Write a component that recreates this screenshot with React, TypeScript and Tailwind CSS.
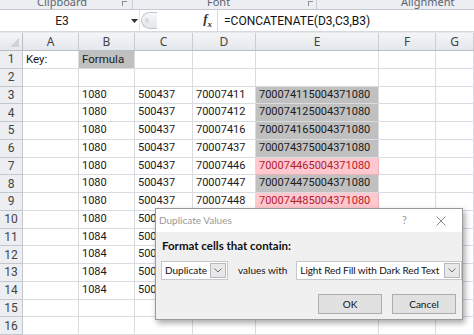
import React from "react";

const cols = [
  { id: "A", w: "w-[56px]" },
  { id: "B", w: "w-[56px]" },
  { id: "C", w: "w-[58px]" },
  { id: "D", w: "w-[63px]" },
  { id: "E", w: "w-[123px]" },
  { id: "F", w: "w-[57px]" },
  { id: "G", w: "flex-1" },
];

type Row = { a?: string; b?: string; c?: string; d?: string; e?: string; dup?: boolean };

const rows: Row[] = [
  { a: "Key:", b: "Formula" },
  {},
  { b: "1080", c: "500437", d: "70007411", e: "700074115004371080" },
  { b: "1080", c: "500437", d: "70007412", e: "700074125004371080" },
  { b: "1080", c: "500437", d: "70007416", e: "700074165004371080" },
  { b: "1080", c: "500437", d: "70007437", e: "700074375004371080" },
  { b: "1080", c: "500437", d: "70007446", e: "700074465004371080", dup: true },
  { b: "1080", c: "500437", d: "70007447", e: "700074475004371080" },
  { b: "1080", c: "500437", d: "70007448", e: "700074485004371080", dup: true },
  { b: "1080", c: "500437" },
  { b: "1084", c: "500437" },
  { b: "1084", c: "500437" },
  { b: "1084", c: "500437" },
  { b: "1084", c: "500437" },
  {},
  {},
];

const Ribbon = () => (
  <div className="h-[10px] overflow-hidden bg-[#eceef1] border-b border-[#c6cad0] flex text-[11px] text-[#5d6470] leading-[13px]">
    <div className="w-[133px] flex border-r border-[#c9cdd3]">
      <span className="-mt-[5px] ml-[37px]">Clipboard</span>
      <span className="ml-auto mr-[5px] w-[5px] h-[5px] border-l border-t border-[#8a8f96] mt-[1px]" />
    </div>
    <div className="w-[184px] flex border-r border-[#c9cdd3]">
      <span className="-mt-[5px] ml-[74px]">Font</span>
      <span className="ml-auto mr-[3px] w-[5px] h-[5px] border-l border-t border-[#8a8f96] mt-[1px]" />
    </div>
    <div className="flex-1 flex">
      <span className="-mt-[5px] ml-[84px]">Alignment</span>
    </div>
  </div>
);

const FormulaBar = () => (
  <div className="h-[22px] bg-white border-b border-[#d5d8dc] flex items-center font-['Roboto',sans-serif]">
    <div className="w-[140px] h-full flex items-center border-r border-[#e2e4e7]">
      <span className="w-[124px] text-center text-[12px] text-[#222]">E3</span>
      <svg width="7" height="4" viewBox="0 0 7 4" className="ml-[7px]">
        <path d="M0 0h7L3.5 4z" fill="#333" />
      </svg>
    </div>
    <div className="w-[16px] h-[17px] ml-[1px] rounded-l-full border border-r-0 border-[#c3c7cc] bg-gradient-to-b from-[#f7f8f9] to-[#e3e6ea] flex items-center pl-[3px]">
      <span className="w-[4px] h-[5px] rounded-full bg-[#d6d9dd]" />
    </div>
    <div className="w-[60px] flex justify-end pr-[5px]">
      <span className="font-['Liberation_Serif',serif] italic text-[13px] text-[#333] font-bold">
        f<span className="text-[9px] align-sub">x</span>
      </span>
    </div>
    <div className="flex-1 h-full border-l border-[#d5d8dc] flex items-center pl-[6px] text-[12px] text-[#111]">
      =CONCATENATE(D3,C3,B3)
    </div>
  </div>
);

const HeaderRow = () => (
  <div className="flex h-[18px] bg-gradient-to-b from-[#f3f4f6] to-[#e5e8ec] border-b border-[#b9bec5] text-[12px] text-[#444]">
    <div className="w-[23px] border-r border-[#b9bec5] flex items-end justify-end p-[3px]">
      <svg width="9" height="9" viewBox="0 0 9 9">
        <path d="M9 0V9H0z" fill="#cfd3d8" />
      </svg>
    </div>
    {cols.map((c) => (
      <div key={c.id} className={`${c.w} border-r border-[#c9cdd3] flex items-center justify-center`}>
        {c.id}
      </div>
    ))}
  </div>
);

const Cell = ({ w, children, cls = "" }: { w: string; children?: React.ReactNode; cls?: string }) => (
  <div className={`${w} border-r border-b border-[#dadcdf] flex items-center pl-[3px] whitespace-nowrap overflow-hidden ${cls}`}>
    {children}
  </div>
);

const Grid = () => (
  <div className="font-['Roboto',sans-serif] text-[11px] text-[#1a1a1a]">
    {rows.map((r, i) => {
      const n = i + 1;
      const eFill = n >= 3 && n <= 9;
      return (
        <div key={n} className="flex h-[17.75px]">
          <div className="w-[23px] bg-[#eceef1] border-r border-b border-[#c3c8ce] flex items-center justify-center text-[12px] text-[#444]">
            {n}
          </div>
          <Cell w="w-[56px]" cls="text-[11.5px]">{r.a}</Cell>
          <Cell w="w-[56px]" cls={n === 1 ? "bg-[#c0c0c0] border-[#b8b8b8] text-[11.5px]" : ""}>
            {r.b}
          </Cell>
          <Cell w="w-[58px]">{r.c}</Cell>
          <Cell w="w-[63px]">{r.d}</Cell>
          <Cell
            w="w-[123px]"
            cls={
              r.dup
                ? "bg-[#ffc7ce] text-[#b3222e] border-[#e8b4ba]"
                : eFill
                ? "bg-[#c0c0c0] border-[#adadad]"
                : ""
            }
          >
            {r.e}
          </Cell>
          <Cell w="w-[57px]" />
          <Cell w="flex-1" />
        </div>
      );
    })}
  </div>
);

const Chevron = () => (
  <div className="w-[16px] h-[15px] shrink-0 border border-[#b5b8bd] bg-[#e8e8e8] flex items-center justify-center">
    <svg width="8" height="5" viewBox="0 0 8 5">
      <path d="M0.5 0.5L4 4L7.5 0.5" fill="none" stroke="#6d6d6d" strokeWidth="1" />
    </svg>
  </div>
);

const Dialog = () => (
  <div className="absolute left-[155px] top-[208px] w-[308px] h-[112px] bg-[#f0f0f0] border border-[#9a9a9a] shadow-[2px_3px_6px_rgba(0,0,0,0.35)] font-['Lato',sans-serif] text-[10px] text-[#111] flex flex-col whitespace-nowrap">
    <div className="h-[23px] bg-white flex items-center pl-[3px]">
      <span className="text-[#9a9a9a] text-[10px]">Duplicate Values</span>
      <span className="ml-auto text-[#999] text-[11px] mr-[29px]">?</span>
      <svg width="10" height="10" viewBox="0 0 10 10" className="mr-[16px]">
        <path d="M0.5 0.5L9.5 9.5M9.5 0.5L0.5 9.5" stroke="#8a8a8a" strokeWidth="1" />
      </svg>
    </div>
    <div className="pl-[6px] pt-[5px] font-bold text-[11.5px]">Format cells that contain:</div>
    <div className="flex items-center mt-[7px] pl-[5px]">
      <div className="w-[67px] h-[19px] shrink-0 bg-white border border-[#c4c7cc] flex items-center justify-between pl-[3px] pr-[1px]">
        <span>Duplicate</span>
        <Chevron />
      </div>
      <span className="ml-[10px] shrink-0">values with</span>
      <div className="ml-[9px] w-[166px] h-[19px] shrink-0 bg-white border border-[#c4c7cc] flex items-center justify-between pl-[3px] pr-[1px]">
        <span className="tracking-[-0.1px]">Light Red Fill with Dark Red Text</span>
        <Chevron />
      </div>
    </div>
    <div className="flex justify-end gap-[10px] mt-[14px] pr-[6px]">
      <button className="w-[64px] h-[20px] bg-[#e1e1e1] border border-[#adadad]">OK</button>
      <button className="w-[64px] h-[20px] bg-[#e1e1e1] border border-[#adadad]">Cancel</button>
    </div>
  </div>
);

export default function App() {
  return (
    <div className="w-[474px] h-[335px] overflow-hidden relative bg-white select-none">
      <Ribbon />
      <FormulaBar />
      <div className="h-[1px] bg-[#e6e8eb]" />
      <HeaderRow />
      <Grid />
      <Dialog />
    </div>
  );
}
